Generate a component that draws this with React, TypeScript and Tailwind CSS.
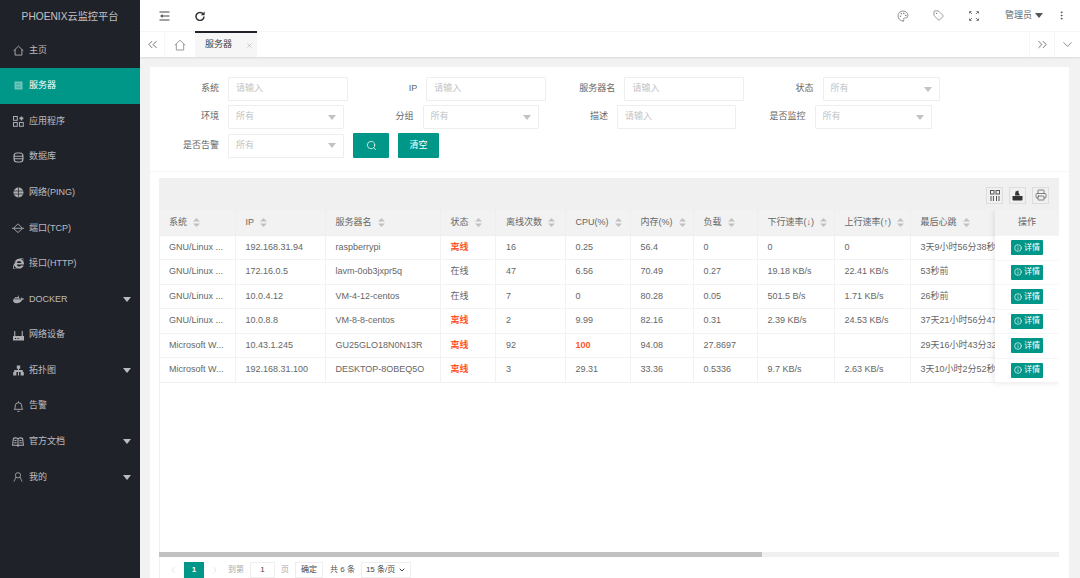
import React from "react";
import { Palette, Tag, EllipsisVertical, ChevronsLeft, ChevronsRight, ChevronDown, ChevronLeft, ChevronRight, Search, X, Info, Printer } from "lucide-react";
import { FaInternetExplorer, FaDocker } from "react-icons/fa";

const Caret = ({ className = "" }: { className?: string }) => (
  <svg width="8" height="5" viewBox="0 0 8 5" className={className}><path d="M0 0h8L4 5z" fill="currentColor" /></svg>
);

const Home = ({ size = 11, sw = 1 }: { size?: number; sw?: number }) => (
  <svg width={size} height={size} viewBox="0 0 12 12" fill="none" stroke="currentColor" strokeWidth={sw}><path d="M.7 6.4 6 1.2l5.3 5.2M2.3 5v6h7.4V5" /></svg>
);
const Server = () => (
  <svg width="11" height="11" viewBox="0 0 11 11" fill="none"><rect x="1.5" y="1.5" width="8" height="8" fill="#7fcbc3" /><path d="M3 4h5M3 7h5" stroke="#33ab9f" /></svg>
);
const Apps = () => (
  <svg width="11" height="11" viewBox="0 0 11 11" fill="none" stroke="currentColor" strokeWidth="1"><rect x=".5" y=".5" width="3.8" height="3.8" /><rect x=".5" y="6.5" width="3.8" height="3.8" /><rect x="6.5" y="6.5" width="3.8" height="3.8" /><path d="M8.4 .4v4M6.4 2.4h4" strokeWidth="1.6" /></svg>
);
const Db = () => (
  <svg width="11" height="11" viewBox="0 0 11 11" fill="none" stroke="currentColor" strokeWidth="1.1"><rect x="1" y="1" width="9" height="9" rx="3" /><path d="M1 4.2h9M1 6.8h9" /></svg>
);
const GlobeFill = () => (
  <svg width="11" height="11" viewBox="0 0 11 11"><circle cx="5.5" cy="5.5" r="5" fill="currentColor" /><path d="M.5 4h10M.5 7h10M5.5.5v10" stroke="#20222a" strokeWidth=".7" /></svg>
);
const Port = () => (
  <svg width="12" height="12" viewBox="0 0 12 12" fill="none" stroke="currentColor"><path d="M1.8 6 6 1.8 10.2 6M1.8 6.8 6 10.5l4.2-3.7M0 6.3h12" strokeWidth=".9" /></svg>
);
const Router = () => (
  <svg width="11" height="11" viewBox="0 0 11 11" fill="currentColor"><path d="M1.2 1h1.1v5h6.4V1h1.1v5H11v4.500H0V6h1.200zM2 8v1h1.200V8zm2.500 0v1h1.200V8z" fillRule="evenodd" /></svg>
);
const Topology = () => (
  <svg width="11" height="11" viewBox="0 0 11 11" fill="currentColor"><path d="M3.800.5h3.400v3.200H6V5h3.800v2h1v3.500H7.600V7H6v3.500H5V7H3.400v3.500H.2V7h1V5H5V3.700H3.800z" /></svg>
);
const Bell = () => (
  <svg width="11" height="11" viewBox="0 0 11 11" fill="none" stroke="currentColor" strokeWidth=".9"><path d="M1.200 8.300c1-.8 1-1.800 1-3.300a3.300 3.300 0 0 1 6.600 0c0 1.500 0 2.500 1 3.300zM5.500.3v1.300M4.300 10.300h2.400" /></svg>
);
const Book = () => (
  <svg width="12" height="11" viewBox="0 0 12 11" fill="none" stroke="currentColor" strokeWidth="1.100"><path d="M6 3C5 1.700 2.500 1.500 1.400 2.500L.6 9.300h4.200L6 10l1.200-.7h4.200l-.8-6.800C9.500 1.500 7 1.700 6 3zM6 3v7M2.500 4.500h2M2.200 6.800h2.300M7.500 4.500h2M7.500 6.800h2.300" /></svg>
);
const Person = () => (
  <svg width="10" height="10" viewBox="0 0 11 11" fill="none" stroke="currentColor" strokeWidth=".9"><circle cx="5.500" cy="3.600" r="2.900" /><path d="M3.300 5.600 1 10.500M7.700 5.600 10 10.500" /></svg>
);
const Corners = () => (
  <svg width="10" height="10" viewBox="0 0 10 10" fill="none" stroke="#777"><path d="M.5 2.500v-2h2M7.500.5h2v2M9.500 7.500v2h-2M2.500 9.500h-2v-2" /><path d="M1 1l2 2M9 1 7 3M9 9 7 7M1 9l2-2" /></svg>
);
const Indent = () => (
  <svg width="11" height="10" viewBox="0 0 11 10" fill="none" stroke="#444" strokeWidth="1.100"><path d="M.5 1h10M.5 9h10M4 5h6.500" /><path d="M3.800 3.300 1 5l2.800 1.700z" fill="#444" stroke="none" /></svg>
);
const Refresh = () => (
  <svg width="10" height="10" viewBox="0 0 10 10" fill="none"><path d="M8.300 3.200A4 4 0 1 0 9 5.500" stroke="#333" strokeWidth="1.500" /><path d="M9.600.4v3.900H5.800z" fill="#333" /></svg>
);
const Columns = () => (
  <svg width="10" height="11" viewBox="0 0 10 11" fill="none" stroke="#555"><rect x=".5" y=".5" width="3.500" height="3.500" /><rect x="6" y=".5" width="3.500" height="3.500" /><path d="M1 6v5M3.400 6v5M6.500 6v5M9 6v5" /></svg>
);
const ExportIc = () => (
  <svg width="11" height="11" viewBox="0 0 11 11" fill="#333"><path d="M3.500 1.500 6.500.5v2l1.500 3H3z" /><path d="M.5 6h10v3.500a1 1 0 0 1-1 1h-8a1 1 0 0 1-1-1z" /></svg>
);
const Sort = () => (
  <svg width="7" height="9" viewBox="0 0 7 9" className="ml-[6px] shrink-0 text-[#c2c2c2]"><path d="M3.500 0 7 3.400H0zM0 5.600h7L3.500 9z" fill="currentColor" /></svg>
);

const ic = "w-[11px] h-[11px]";
const menu: [React.ReactNode, string, boolean?, boolean?][] = [
  [<Home />, "主页"],
  [<Server />, "服务器", false, true],
  [<Apps />, "应用程序"],
  [<Db />, "数据库"],
  [<GlobeFill />, "网络(PING)"],
  [<Port />, "端口(TCP)"],
  [<FaInternetExplorer className={ic} />, "接口(HTTP)"],
  [<FaDocker className={ic} />, "DOCKER", true],
  [<Router />, "网络设备"],
  [<Topology />, "拓扑图", true],
  [<Bell />, "告警"],
  [<Book />, "官方文档", true],
  [<Person />, "我的", true],
];

const cols: [string, number][] = [
  ["系统", 76], ["IP", 90], ["服务器名", 115], ["状态", 55.5], ["离线次数", 69.5], ["CPU(%)", 65], ["内存(%)", 63], ["负载", 64], ["下行速率(↓)", 77], ["上行速率(↑)", 76], ["最后心跳", 130],
];
const rows = [
  ["GNU/Linux ...", "192.168.31.94", "raspberrypi", "离线", "16", "0.25", "56.4", "0", "0", "0", "3天9小时56分38秒"],
  ["GNU/Linux ...", "172.16.0.5", "lavm-0ob3jxpr5q", "在线", "47", "6.56", "70.49", "0.27", "19.18 KB/s", "22.41 KB/s", "53秒前"],
  ["GNU/Linux ...", "10.0.4.12", "VM-4-12-centos", "在线", "7", "0", "80.28", "0.05", "501.5 B/s", "1.71 KB/s", "26秒前"],
  ["GNU/Linux ...", "10.0.8.8", "VM-8-8-centos", "离线", "2", "9.99", "82.16", "0.31", "2.39 KB/s", "24.53 KB/s", "37天21小时56分47秒"],
  ["Microsoft W...", "10.43.1.245", "GU25GLO18N0N13R", "离线", "92", "100", "94.08", "27.8697", "", "", "29天16小时43分32秒"],
  ["Microsoft W...", "192.168.31.100", "DESKTOP-8OBEQ5O", "离线", "3", "29.31", "33.36", "0.5336", "9.7 KB/s", "2.63 KB/s", "3天10小时2分52秒"],
];

const Label = ({ t }: { t: string }) => <span className="w-[60px] mr-[9px] text-right text-[#666] shrink-0 whitespace-nowrap">{t}</span>;
const Input = ({ t, w }: { t: string; w: string }) => (
  <div className={`${w} h-[24px] flex items-center px-[7px] border border-[#eeeeee] rounded-[1px] bg-white text-[#c4c4c4]`}>{t}</div>
);
const Select = ({ w }: { w: string }) => (
  <div className={`${w} h-[24px] flex items-center justify-between px-[7px] border border-[#eeeeee] rounded-[1px] bg-white text-[#c4c4c4]`}>
    所有<Caret className="text-[#c2c2c2]" />
  </div>
);
const ToolBtn = ({ children }: { children: React.ReactNode }) => (
  <div className="w-[17px] h-[17px] flex items-center justify-center border border-[#dddddd]">{children}</div>
);

export default function App() {
  return (
    <div className="flex w-full h-[578px] overflow-hidden bg-[#f2f2f2] text-[9px] text-[#666] font-['Liberation_Sans','Noto_Sans_CJK_SC',sans-serif]">
      <aside className="w-[140px] shrink-0 bg-[#20222a] text-[#ffffffb3] flex flex-col">
        <div className="h-[32.5px] shrink-0 flex items-center justify-center text-[10.2px] text-[#ffffffbb]">PHOENIX云监控平台</div>
        {menu.map(([icon, label, caret, active]) => (
          <div key={label} className={`h-[35.6px] shrink-0 flex items-center pl-[12px] pr-[9px] ${active ? "bg-[#009688] text-white" : ""}`}>
            <span className="w-[12px] h-[12px] flex items-center justify-center mr-[5px] opacity-90">{icon}</span>
            <span className="flex-1">{label}</span>
            {caret && <Caret className="w-[8px] text-[#ffffffb3]" />}
          </div>
        ))}
      </aside>

      <main className="flex-1 min-w-0 flex flex-col">
        <header className="h-[32px] shrink-0 bg-white border-b border-[#f6f6f6] flex items-center pl-[19px] pr-[13px]">
          <Indent />
          <span className="ml-[25px]"><Refresh /></span>
          <div className="flex-1" />
          <Palette className="w-[12px] h-[12px] text-[#777]" strokeWidth={1.6} />
          <Tag className="w-[11px] h-[11px] text-[#777] ml-[24px]" strokeWidth={1.6} />
          <span className="ml-[25px]"><Corners /></span>
          <span className="ml-[26px] text-[#666]">管理员</span>
          <Caret className="ml-[3px] text-[#555]" />
          <EllipsisVertical className="w-[11px] h-[11px] text-[#555] ml-[13px]" strokeWidth={2} />
        </header>

        <div className="h-[25px] shrink-0 bg-white flex items-stretch shadow-[0_1px_2px_#0000001a] relative">
          <div className="w-[25px] flex items-center justify-center border-r border-[#f6f6f6]"><ChevronsLeft className="w-[15px] h-[15px] text-[#555]" strokeWidth={1.3} /></div>
          <div className="w-[30px] flex items-center justify-center text-[#999]"><Home size={12} /></div>
          <div className="w-[62px] -mt-[1px] border-t-[2px] border-[#20222a] bg-[#f6f6f6] flex items-center pl-[10px] text-[#444]">
            <span>服务器</span><X className="w-[7px] h-[7px] ml-[14px] text-[#aaa]" />
          </div>
          <div className="flex-1" />
          <div className="w-[25px] flex items-center justify-center border-l border-[#f6f6f6]"><ChevronsRight className="w-[15px] h-[15px] text-[#555]" strokeWidth={1.3} /></div>
          <div className="w-[26px] flex items-center justify-center border-l border-[#f6f6f6]"><ChevronDown className="w-[15px] h-[15px] text-[#555]" strokeWidth={1.1} /></div>
        </div>

        <section className="flex-1 min-h-0 ml-[10px] mr-[11px] mt-[10px] pl-[9px] pr-[10px] bg-white flex flex-col">
          <div className="pt-[10px] pb-[13px] border-b border-[#f6f6f6] -mx-[9px] px-[9px] flex flex-col gap-[4px]">
            <div className="flex items-center gap-[9.2px]">
              <div className="flex items-center"><Label t="系统" /><Input t="请输入" w="w-[120px]" /></div>
              <div className="flex items-center"><Label t="IP" /><Input t="请输入" w="w-[120px]" /></div>
              <div className="flex items-center"><Label t="服务器名" /><Input t="请输入" w="w-[120px]" /></div>
              <div className="flex items-center"><Label t="状态" /><Select w="w-[117px]" /></div>
            </div>
            <div className="flex items-center gap-[9.5px]">
              <div className="flex items-center"><Label t="环境" /><Select w="w-[116px]" /></div>
              <div className="flex items-center"><Label t="分组" /><Select w="w-[116px]" /></div>
              <div className="flex items-center"><Label t="描述" /><Input t="请输入" w="w-[119px]" /></div>
              <div className="flex items-center"><Label t="是否监控" /><Select w="w-[117px]" /></div>
            </div>
            <div className="flex items-center gap-[9px]">
              <div className="flex items-center"><Label t="是否告警" /><Select w="w-[116px]" /></div>
              <button className="w-[36px] h-[25px] bg-[#009688] rounded-[1px] flex items-center justify-center text-white"><Search className="w-[11px] h-[11px]" strokeWidth={1.6} /></button>
              <button className="w-[41px] h-[25px] bg-[#009688] rounded-[1px] flex items-center justify-center text-white">清空</button>
            </div>
          </div>

          <div className="mt-[6px] flex-1 min-h-0 flex flex-col relative">
            <div className="h-[32px] shrink-0 bg-[#f0f0f0] flex items-center justify-end gap-[6px] pr-[10px] pt-[2px]">
              <ToolBtn><Columns /></ToolBtn>
              <ToolBtn><ExportIc /></ToolBtn>
              <ToolBtn><Printer className="w-[12px] h-[12px] text-[#666]" strokeWidth={1.6} /></ToolBtn>
            </div>
            <div className="flex-1 min-h-0 overflow-hidden border-l border-[#f0f0f0] relative">
              <table className="table-fixed border-collapse w-[880px] -ml-px">
                <colgroup>{cols.map(([n, w]) => <col key={n} style={{ width: w }} />)}</colgroup>
                <thead>
                  <tr className="h-[25px] bg-[#f2f2f2]">
                    {cols.map(([n]) => (
                      <th key={n} className="border-r border-b border-[#eeeeee] px-[10px] font-normal text-left whitespace-nowrap">
                        <span className="flex items-center">{n}<Sort /></span>
                      </th>
                    ))}
                  </tr>
                </thead>
                <tbody>
                  {rows.map((r, i) => (
                    <tr key={i} className="h-[24.5px]">
                      {r.map((c, j) => (
                        <td key={j} className={`border-r border-b border-[#f2f2f2] px-[10px] whitespace-nowrap overflow-hidden ${c === "离线" || c === "100" ? "text-[#ff5722] font-bold" : ""}`}>{c}</td>
                      ))}
                    </tr>
                  ))}
                </tbody>
              </table>
              <div className="absolute right-0 top-0 w-[64px] bg-white shadow-[-1px_0_6px_#0000001a] border-b border-[#f2f2f2]">
                <div className="h-[25px] bg-[#f2f2f2] flex items-center justify-center">操作</div>
                {rows.map((_, i) => (
                  <div key={i} className="h-[24.5px] border-t border-[#f6f6f6] flex items-center justify-center">
                    <span className="w-[32px] h-[15px] bg-[#009688] text-white flex items-center justify-center gap-[2px] text-[8px] rounded-[1px]"><Info className="w-[8px] h-[8px]" />详情</span>
                  </div>
                ))}
              </div>
            </div>
            <div className="h-[5px] shrink-0 bg-[#f0f0f0]"><div className="h-full w-[67%] bg-[#c1c1c1]" /></div>
            <div className="h-[21px] shrink-0 pt-[5px] flex items-start text-[8px] pl-[8px] border-l border-[#f0f0f0]">
              <ChevronLeft className="w-[10px] h-[16px] text-[#c8c8c8]" strokeWidth={1.2} />
              <span className="w-[20px] h-[16px] ml-[6px] bg-[#009688] text-white flex items-center justify-center font-bold">1</span>
              <ChevronRight className="w-[10px] h-[16px] ml-[6px] text-[#c8c8c8]" strokeWidth={1.2} />
              <span className="ml-[8px] h-[16px] flex items-center text-[#aaa]">到第</span>
              <span className="ml-[6px] w-[25px] h-[16px] border border-[#eeeeee] flex items-center justify-center text-[#444]">1</span>
              <span className="ml-[6px] h-[16px] flex items-center text-[#aaa]">页</span>
              <span className="ml-[6px] w-[28px] h-[16px] border border-[#eeeeee] flex items-center justify-center text-[#444]">确定</span>
              <span className="ml-[7px] h-[16px] flex items-center text-[#555]">共 6 条</span>
              <span className="ml-[6px] w-[50px] h-[16px] border border-[#eeeeee] flex items-center justify-between px-[4px] text-[#444]">15 条/页<ChevronDown className="w-[8px] h-[8px]" strokeWidth={3} /></span>
            </div>
          </div>
        </section>
      </main>
    </div>
  );
}
